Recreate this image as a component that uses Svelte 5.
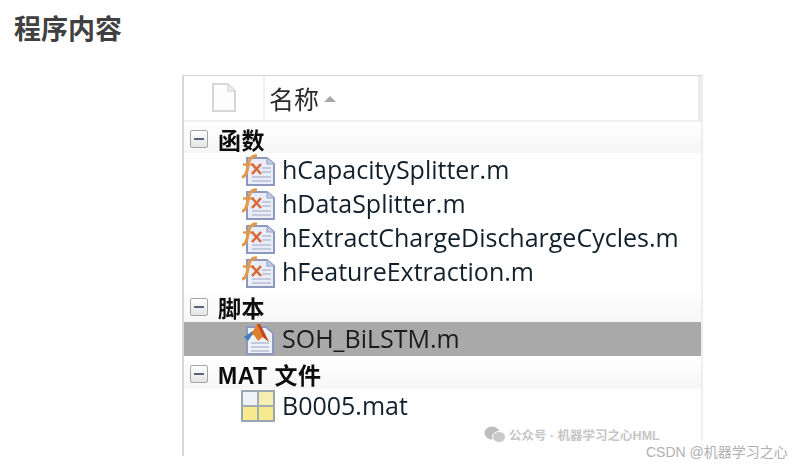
<script>
  const groups = [
    { name: "函数", files: [
      { name: "hCapacitySplitter.m", icon: "fx" },
      { name: "hDataSplitter.m", icon: "fx" },
      { name: "hExtractChargeDischargeCycles.m", icon: "fx" },
      { name: "hFeatureExtraction.m", icon: "fx" }
    ] },
    { name: "脚本", files: [{ name: "SOH_BiLSTM.m", icon: "script", selected: true }] },
    { name: "MAT 文件", files: [{ name: "B0005.mat", icon: "mat" }] }
  ];
</script>

<div class="page">
  <h1>程序内容</h1>
  <div class="panel">
    <div class="head">
      <div class="head-icon">
        <svg width="28" height="32" viewBox="0 0 28 32">
          <path d="M3 2 H18 L25 9 V29 H3 Z" fill="#fdfdfd" stroke="#d6d6d6" stroke-width="2" />
          <path d="M18 2 V9 H25" fill="#ececec" stroke="#dcdcdc" stroke-width="1.5" />
        </svg>
      </div>
      <div class="head-name">名称<span class="sort"></span></div>
    </div>
    {#each groups as group}
      <div class="group">
        <span class="minus"><i></i></span>
        <b>{group.name}</b>
      </div>
      {#each group.files as file}
        <div class="file" class:selected={file.selected}>
          <svg class="icon" width="36" height="34" viewBox="0 0 36 34">
            {#if file.icon === "fx"}
              <path d="M7 5 H27 L34 11 V32 H7 Z" fill="#e9edf7" stroke="#8d97c0" stroke-width="2" />
              <path d="M27 5 V11 H34" fill="#c3cde6" stroke="#9aa4c4" stroke-width="1.200" />
              <path d="M22 15 H31 M22 19 H31 M12 24 H31 M12 28 H31" stroke="#b6bfd6" stroke-width="1.500" />
              <path d="M2 24 C6 24 7 19 8 13 C9 7 11 2 17 3" fill="none" stroke="#e09a4c" stroke-width="3" />
              <path d="M3 11.500 H14" stroke="#e09a4c" stroke-width="2.400" />
              <path d="M12 11 L21 21 M21 11 L12 21" stroke="#d9683a" stroke-width="2.600" />
            {:else if file.icon === "script"}
              <path d="M7 5 H26 L33 11 V32 H7 Z" fill="#eef1f8" stroke="#8e99bd" stroke-width="2" />
              <path d="M11 21 H29 M11 25 H29 M11 29 H29" stroke="#b4bdd2" stroke-width="1.500" />
              <path d="M4 15 L13 9 L17 2 L20 2 L29 20 L23 15 L18 19 L14 13 Z" fill="#e0802f" />
              <path d="M4 15 L13 9 L12 13 L8 19 Z" fill="#3f7fbe" />
              <path d="M17 2 L20 2 L29 20 L23 15 Z" fill="#c2451e" />
            {:else}
              <rect x="2" y="2" width="32" height="30" fill="#f7e98e" stroke="#98a6b0" stroke-width="2" />
              <rect x="3" y="3" width="14" height="13" fill="#eef3f8" />
              <rect x="19" y="3" width="14" height="13" fill="#f5eeb0" />
              <path d="M2 17 H34 M18 2 V32" stroke="#a0adb0" stroke-width="2" />
            {/if}
          </svg>
          <span>{file.name}</span>
        </div>
      {/each}
    {/each}
  </div>
  <div class="mark">
    <svg width="22" height="18" viewBox="0 0 22 18">
      <ellipse cx="8" cy="7" rx="7.500" ry="6.500" fill="#bdbdbd" />
      <ellipse cx="15" cy="11" rx="6.500" ry="5.500" fill="#c9c9c9" stroke="#fff" stroke-width="1" />
    </svg>
    <span>公众号 · 机器学习之心HML</span>
  </div>
  <div class="csdn">CSDN @机器学习之心</div>
</div>

<style>
  :global(body) {
    margin: 0;
    background: #fff;
  }

  .page {
    position: relative;
    width: 795px;
    height: 465px;
    overflow: hidden;
    box-sizing: border-box;
    padding: 12px 0 0 14px;
    font-family: "Open Sans", "Noto Sans CJK SC", sans-serif;
  }

  h1 {
    margin: 0;
    font-size: 27px;
    line-height: 32px;
    font-weight: 700;
    color: #404040;
    font-family: "Noto Sans CJK SC", sans-serif;
  }

  .panel {
    width: 517px;
    height: 380px;
    margin: 31px 0 0 168px;
    border: solid #d8d8d8;
    border-width: 1px 0 0 2px;
    border-right: 2px solid #eeeeee;
    filter: blur(0.3px);
  }

  .head {
    display: flex;
    height: 44px;
    border-bottom: 2px solid #efefef;
    box-shadow: inset -3px 0 0 #ebebeb;
  }

  .head-icon {
    width: 79px;
    display: flex;
    align-items: center;
    justify-content: center;
    border-right: 2px solid #f0f0f0;
  }

  .head-name {
    display: flex;
    align-items: center;
    padding-left: 4px;
    font-size: 25px;
    color: #2b2b2b;
    font-family: "Noto Sans CJK SC", sans-serif;
  }

  .sort {
    width: 0;
    height: 0;
    margin: 2px 0 0 5px;
    border: solid transparent;
    border-width: 0 6px 6px;
    border-bottom-color: #a8a8a8;
  }

  .group {
    display: flex;
    align-items: center;
    box-sizing: border-box;
    height: 33px;
    padding: 3px 0 0 6px;
    background: linear-gradient(#fff, #f6f6f6);
    color: #0c0c0c;
  }

  .group:nth-child(2) {
    height: 31px;
  }

  .group b {
    margin-left: 10px;
    font-size: 23px;
    font-weight: 700;
    letter-spacing: 0.500px;
    font-family: "Liberation Sans", "Noto Sans CJK SC", sans-serif;
  }

  .minus {
    display: flex;
    align-items: center;
    justify-content: center;
    width: 16px;
    height: 16px;
    border: 1px solid #a5a5a5;
    border-radius: 2px;
    background: linear-gradient(#fff, #e4e4e4);
  }

  .minus i {
    width: 10px;
    height: 2px;
    background: #5a6478;
  }

  .file {
    display: flex;
    align-items: center;
    height: 34px;
    padding-left: 56px;
    font-size: 25px;
    color: #12202c;
  }

  .file span {
    margin-top: -3px;
  }

  .file.selected {
    background: #a9a9a9;
    color: #1c1c1c;
  }

  .icon {
    flex: none;
    margin-right: 6px;
  }

  .mark {
    position: absolute;
    left: 484px;
    top: 425px;
    display: flex;
    align-items: center;
    gap: 3px;
    font-size: 12.500px;
    font-weight: 700;
    color: #c6c6c6;
    font-family: "Liberation Sans", "Noto Sans CJK SC", sans-serif;
  }

  .csdn {
    position: absolute;
    left: 646px;
    top: 441px;
    font-size: 14px;
    color: #b0b0b0;
    background: rgba(255, 255, 255, 0.6);
    font-family: "Liberation Sans", "Noto Sans CJK SC", sans-serif;
  }
</style>
